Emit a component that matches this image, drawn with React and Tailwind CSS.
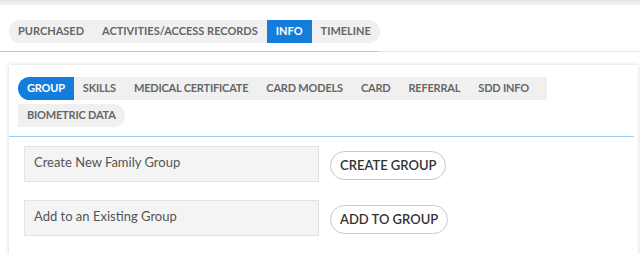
import React from "react";

const font = { fontFamily: "Lato, 'Open Sans', sans-serif" };

const mainTabs = ["PURCHASED", "ACTIVITIES/ACCESS RECORDS", "INFO", "TIMELINE"];
const subTabs = [
  "GROUP",
  "SKILLS",
  "MEDICAL CERTIFICATE",
  "CARD MODELS",
  "CARD",
  "REFERRAL",
  "SDD INFO",
];

function GroupRow({ label, action }) {
  return (
    <div className="flex items-center">
      <div className="w-[295px] h-[36px] bg-[#f4f4f4] border border-[#e2e2e2] flex items-center pl-[9px] pb-[2px] text-[13px] text-[#555]">
        {label}
      </div>
      <button className="ml-[11px] h-[29px] px-[9px] rounded-full border border-[#c8c8c8] bg-white text-[13px] font-semibold text-[#333] mt-[3px]">
        {action}
      </button>
    </div>
  );
}

export default function App() {
  return (
    <div className="w-[640px] h-[254px] bg-white overflow-hidden relative" style={font}>
      {/* top shadow */}
      <div className="h-[5px] bg-gradient-to-b from-[#e4e4e4] to-[#f4f4f4]" />

      {/* main tabs */}
      <div className="pt-[12px] px-[9px] h-[46px]">
        <div className="inline-flex h-[23px] bg-[#f0f0f0] rounded-full overflow-hidden px-[9px] text-[11px] font-bold text-[#666] tracking-[0px]">
          {mainTabs.map((t) => (
            <div
              key={t}
              className={
                t === "INFO"
                  ? "flex items-center px-[9px] bg-[#127ddb] text-white"
                  : "flex items-center px-[9px] first:pl-0 last:pr-0"
              }
            >
              {t}
            </div>
          ))}
        </div>
      </div>
      <div className="flex h-[1px]">
        <div className="w-[379px] bg-[#9ecdf3]" />
        <div className="flex-1 bg-[#e6e6e6]" />
      </div>

      {/* card */}
      <div className="ml-[9px] mr-[2px] mt-[13px] bg-white shadow-[0_0_4px_rgba(0,0,0,0.18)] h-[200px]">
        <div className="pt-[12px] px-[9px] text-[11px] font-bold text-[#666] tracking-[-0.2px]">
          <div className="flex">
            {subTabs.map((t) => (
              <div
                key={t}
                className={
                  t === "GROUP"
                    ? "h-[23px] flex items-center px-[9px] bg-[#127ddb] text-white rounded-l-full"
                    : "h-[23px] flex items-center px-[9px] bg-[#f0f0f0]"
                }
              >
                {t}
              </div>
            ))}
            <div className="h-[23px] w-[9px] bg-[#f0f0f0]" />
          </div>
          <div className="flex mt-[4px]">
            <div className="h-[23px] flex items-center px-[9px] bg-[#f0f0f0] rounded-r-full">
              BIOMETRIC DATA
            </div>
          </div>
        </div>
        <div className="mt-[9px] mr-[4px] h-[1px] bg-[#9ecdf3]" />

        <div className="pl-[15px] pt-[9px] flex flex-col gap-[18px]">
          <GroupRow label="Create New Family Group" action="CREATE GROUP" />
          <GroupRow label="Add to an Existing Group" action="ADD TO GROUP" />
        </div>
      </div>
    </div>
  );
}
